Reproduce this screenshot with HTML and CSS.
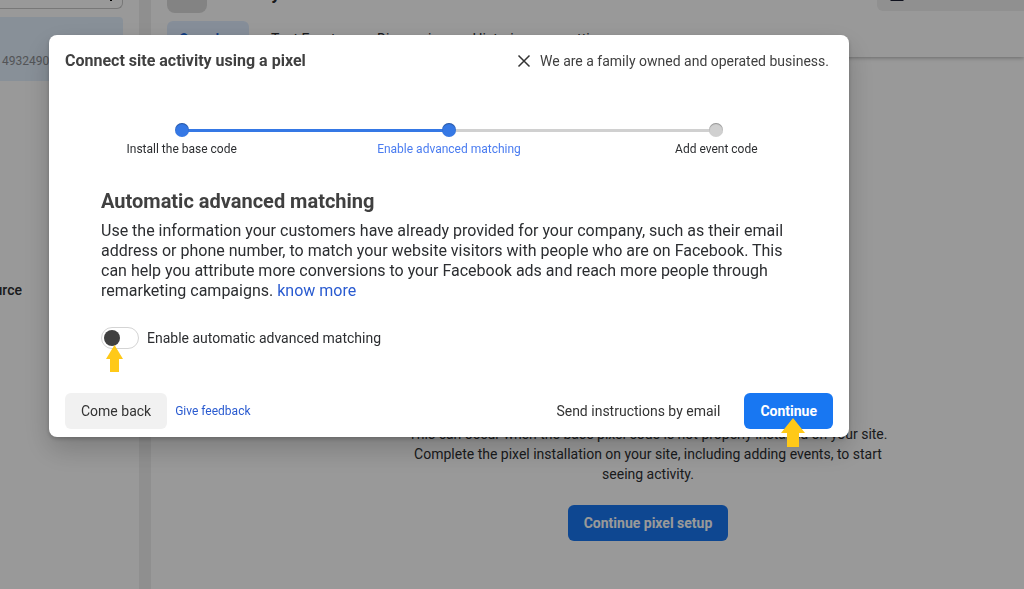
FILE: index.html
```html
<!DOCTYPE html>
<html lang="en">
<head>
<meta charset="utf-8">
<title>Connect site activity using a pixel</title>
<link rel="stylesheet" href="styles.css">
</head>
<body>
<div class="page">
  <aside class="sidebar">
    <div class="search"><svg class="search-caret" viewBox="0 0 8 4" aria-hidden="true"><path d="M3 0h2v1H3z"/></svg></div>
    <div class="source-card">4932490</div>
    <div class="sidebar-label"><span>source</span></div>
  </aside>
  <main class="main">
    <header class="header">
      <div class="header-top">
        <span class="avatar"></span>
        <h1 class="page-title">Activity</h1>
        <div class="header-action"><svg class="action-icon" viewBox="0 0 14 1" aria-hidden="true"><path d="M0 0h14l-1 1H1z"/></svg></div>
      </div>
      <nav class="tabs">
        <a class="tab tab-active" href="#">Overview</a>
        <a class="tab" href="#">Test Events</a>
        <a class="tab" href="#">Diagnosis</a>
        <a class="tab" href="#">Histories</a>
        <a class="tab" href="#">settings</a>
      </nav>
    </header>
    <section class="empty">
      <p class="empty-text">This can occur when the base pixel code is not properly installed on your site. Complete the pixel installation on your site, including adding events, to start seeing activity.</p>
      <button class="button button-primary" type="button">Continue pixel setup</button>
    </section>
  </main>
</div>
<div class="overlay">
  <div class="dialog" role="dialog" aria-labelledby="dialog-title">
    <div class="dialog-head">
      <h2 class="dialog-title" id="dialog-title">Connect site activity using a pixel</h2>
      <div class="dialog-note">
        <button class="close" type="button" aria-label="Close"><svg viewBox="0 0 14 14" aria-hidden="true"><path d="M1.500 1.500l11 11M12.500 1.500l-11 11"/></svg></button>
        <span>We are a family owned and operated business.</span>
      </div>
    </div>
    <ol class="steps">
      <li class="step step-done"><span class="dot"></span><span>Install the base code</span></li>
      <li class="step step-current"><span class="dot"></span><span>Enable advanced matching</span></li>
      <li class="step"><span class="dot"></span><span>Add event code</span></li>
    </ol>
    <div class="content">
      <h3 class="content-title">Automatic advanced matching</h3>
      <p class="content-text">Use the information your customers have already provided for your company, such as their email address or phone number, to match your website visitors with people who are on Facebook. This can help you attribute more conversions to your Facebook ads and reach more people through remarketing campaigns. <a class="link" href="#">know more</a></p>
      <div class="toggle-row">
        <span class="toggle-box">
          <input class="toggle" type="checkbox" id="matching">
          <svg class="pointer pointer-small" viewBox="0 0 17 27" aria-hidden="true"><path d="M8.500 0L17 14h-4v13H4V14H0z"/></svg>
        </span>
        <label for="matching">Enable automatic advanced matching</label>
      </div>
    </div>
    <div class="dialog-foot">
      <button class="button button-gray" type="button">Come back</button>
      <a class="link feedback" href="#">Give feedback</a>
      <button class="button button-plain" type="button">Send instructions by email</button>
      <span class="continue-box">
        <button class="button button-primary" type="button">Continue</button>
        <svg class="pointer pointer-large" viewBox="0 0 24 29" aria-hidden="true"><path d="M12 0L24 15h-6v14H6V15H0z"/></svg>
      </span>
    </div>
  </div>
</div>
</body>
</html>
```
FILE: styles.css
```css
* { box-sizing: border-box; }

body {
  margin: 0;
  overflow: hidden;
  font-family: Roboto, sans-serif;
  font-size: 14px;
  line-height: 20px;
  color: #2c2e31;
}

h1, h2, h3, p, ol { margin: 0; padding: 0; }

a { color: inherit; text-decoration: none; }

.page {
  display: grid;
  grid-template-columns: 139px 1fr;
  column-gap: 12px;
  height: 100vh;
  background: #efefef;
  overflow: hidden;
}

.sidebar, .main {
  background: #fff;
  overflow: hidden;
}

.search {
  display: flex;
  justify-content: flex-end;
  height: 9px;
  margin-right: 16px;
  padding-right: 7px;
  border: 1px solid #c8c8c8;
  border-width: 0 1px 1px 0;
  border-radius: 0 0 6px 0;
}

.search-caret { width: 8px; height: 4px; }

.source-card {
  height: 64px;
  margin: 8px 16px 0 0;
  padding: 34px 0 0 2px;
  border-radius: 0 4px 0 0;
  background: #e3f0fd;
  color: #8a8d91;
  font-size: 12px;
}

.sidebar-label {
  display: flex;
  justify-content: flex-end;
  width: 22px;
  margin-top: 199px;
  overflow: hidden;
  font-weight: 500;
}

.header {
  height: 57px;
  padding-left: 16px;
  box-shadow: 0 1px 4px rgba(0, 0, 0, 0.3);
}

.header-top {
  display: flex;
  align-items: flex-end;
  height: 13px;
}

.avatar {
  width: 40px;
  height: 13px;
  border-radius: 0 0 8px 8px;
  background: #dadada;
}

.page-title {
  margin: 0 0 8px 12px;
  font-size: 18px;
  line-height: 24px;
  font-weight: 700;
}

.header-action {
  align-self: flex-start;
  display: flex;
  width: 147px;
  height: 11px;
  margin-left: auto;
  padding-left: 13px;
  border-radius: 0 0 0 6px;
  background: #f0f0f0;
}

.action-icon { width: 14px; height: 1px; fill: #1c1e33; }

.tabs {
  display: flex;
  gap: 10px;
  margin-top: 8px;
}

.tab { padding: 8px 12px; }

.tab-active {
  border-radius: 6px 6px 0 0;
  background: #dfedff;
  color: #1864d8;
  font-weight: 700;
}

.empty {
  display: flex;
  flex-direction: column;
  align-items: center;
  gap: 21px;
  padding: 367px 0 0 121px;
}

.empty-text {
  max-width: 480px;
  text-align: center;
}

.overlay {
  position: fixed;
  inset: 0;
  padding: 35px 49px;
  background: rgba(0, 0, 0, 0.4);
}

.dialog {
  max-width: 800px;
  padding: 16px 16px 8px;
  border-radius: 8px;
  background: #fff;
  box-shadow: 0 12px 28px rgba(0, 0, 0, 0.2), 0 2px 4px rgba(0, 0, 0, 0.2);
}

.dialog-head {
  display: flex;
  justify-content: space-between;
  padding-right: 4px;
}

.dialog-title {
  color: #404040;
  font-size: 16px;
  line-height: 20px;
  font-weight: 700;
}

.dialog-note {
  display: flex;
  align-items: center;
  gap: 9px;
  color: #404040;
}

.close {
  display: flex;
  padding: 0;
  border: 0;
  background: none;
}

.close svg {
  width: 14px;
  height: 14px;
  fill: none;
  stroke: #333;
  stroke-width: 1.5;
}

.steps {
  display: grid;
  grid-template-columns: repeat(3, 1fr);
  margin: 52px -17px 0;
  list-style: none;
  font-size: 12px;
  line-height: 16px;
}

.step {
  position: relative;
  display: flex;
  flex-direction: column;
  align-items: center;
  gap: 4px;
}

.step:not(:last-child)::before {
  content: "";
  position: absolute;
  top: 6px;
  left: 50%;
  width: 100%;
  height: 3px;
  background: #d0d0d0;
}

.step-done:not(:last-child)::before { background: #3578e5; }

.dot {
  z-index: 1;
  width: 14px;
  height: 14px;
  border-radius: 50%;
  background: #d0d0d0;
  box-shadow: inset 0 1px 1px rgba(0, 0, 0, 0.3);
}

.step-done .dot, .step-current .dot { background: #3578e5; }

.step-current { color: #4a7cf0; }

.content { padding: 32px 36px 0; }

.content-title {
  color: #404040;
  font-size: 20px;
  line-height: 24px;
  font-weight: 700;
}

.content-text {
  margin-top: 8px;
  font-size: 16px;
  line-height: 20px;
}

.link { color: #2a5bd0; }

.toggle-row {
  display: flex;
  align-items: center;
  gap: 8px;
  margin-top: 26px;
}

.toggle-box, .continue-box {
  position: relative;
  display: flex;
}

.toggle {
  appearance: none;
  display: flex;
  align-items: center;
  width: 38px;
  height: 22px;
  margin: 0;
  padding: 2px;
  border: 1px solid #d4d4d4;
  border-radius: 11px;
  background: #fff;
}

.toggle::before {
  content: "";
  width: 16px;
  height: 16px;
  border-radius: 50%;
  background: #404040;
}

.pointer {
  position: absolute;
  fill: #ffc918;
}

.pointer-small {
  top: 18px;
  left: 5px;
  width: 17px;
  height: 27px;
}

.pointer-large {
  top: 25px;
  left: 37px;
  width: 24px;
  height: 29px;
}

.dialog-foot {
  display: flex;
  align-items: center;
  margin-top: 44px;
}

.button {
  height: 36px;
  padding: 0 16px;
  border: 0;
  border-radius: 6px;
  font: inherit;
  color: #333;
}

.button-primary {
  background: #1877f2;
  color: #fff;
  font-weight: 700;
}

.button-gray { background: #f1f1f1; }

.button-plain {
  margin: 0 8px 0 auto;
  background: none;
}

.feedback {
  margin-left: 8px;
  font-size: 12px;
}
```
